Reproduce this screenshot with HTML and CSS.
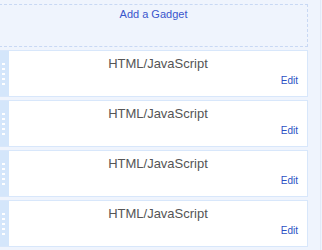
FILE: index.html
```html
<!DOCTYPE html>
<html lang="en">
<head>
    <meta charset="UTF-8">
    <title>Page Elements</title>
    <link rel="stylesheet" href="styles.css">
</head>
<body>
    <div class="column">
        <div class="add-gadget">
            <a href="#">Add a Gadget</a>
        </div>
        <div class="widget-list">
            <div class="widget">
                <div class="handle"><span></span><span></span><span></span><span></span><span></span></div>
                <div class="widget-body">
                    <div class="widget-title">HTML/JavaScript</div>
                    <a class="edit" href="#">Edit</a>
                </div>
            </div>
            <div class="widget">
                <div class="handle"><span></span><span></span><span></span><span></span><span></span></div>
                <div class="widget-body">
                    <div class="widget-title">HTML/JavaScript</div>
                    <a class="edit" href="#">Edit</a>
                </div>
            </div>
            <div class="widget">
                <div class="handle"><span></span><span></span><span></span><span></span><span></span></div>
                <div class="widget-body">
                    <div class="widget-title">HTML/JavaScript</div>
                    <a class="edit" href="#">Edit</a>
                </div>
            </div>
            <div class="widget">
                <div class="handle"><span></span><span></span><span></span><span></span><span></span></div>
                <div class="widget-body">
                    <div class="widget-title">HTML/JavaScript</div>
                    <a class="edit" href="#">Edit</a>
                </div>
            </div>
        </div>
    </div>
</body>
</html>
```

FILE: styles.css
```css
body {
    margin: 0;
    padding: 0;
    background-color: #eff4fd;
    font-family: 'Liberation Sans', Arial, sans-serif;
    overflow: hidden;
}

.column {
    width: 321px;
    height: 250px;
    padding-top: 4px;
    box-sizing: border-box;
    border-right: 1px solid #e2eaf8;
}

.add-gadget {
    margin-left: -1px;
    width: 309px;
    height: 43px;
    box-sizing: border-box;
    border: 1px dashed #c8d8f4;
    padding-top: 3px;
    text-align: center;
    font-size: 11px;
    line-height: 13px;
}

.add-gadget a {
    color: #3a55cc;
    text-decoration: none;
}

.widget-list {
    margin-top: 3px;
    display: flex;
    flex-direction: column;
    gap: 3px;
}

.widget {
    display: flex;
    margin-left: -1px;
    width: 309px;
    height: 47px;
    box-sizing: border-box;
    border: 1px solid #d8e7fb;
}

.handle {
    width: 9px;
    background: #d4e6fb;
    display: flex;
    flex-direction: column;
    justify-content: center;
    gap: 3px;
    padding-left: 2px;
    box-sizing: border-box;
}

.handle span {
    display: block;
    width: 3px;
    height: 2px;
    background: #ffffff;
}

.widget-body {
    flex: 1;
    background: #ffffff;
    display: flex;
    flex-direction: column;
    padding: 5px 0 9px 0;
}

.widget-title {
    text-align: center;
    font-size: 13px;
    line-height: 15px;
    color: #555555;
}

.edit {
    align-self: flex-end;
    margin-top: 4px;
    margin-right: 9px;
    font-size: 10px;
    line-height: 12px;
    color: #2a4fc4;
    text-decoration: none;
}
```
